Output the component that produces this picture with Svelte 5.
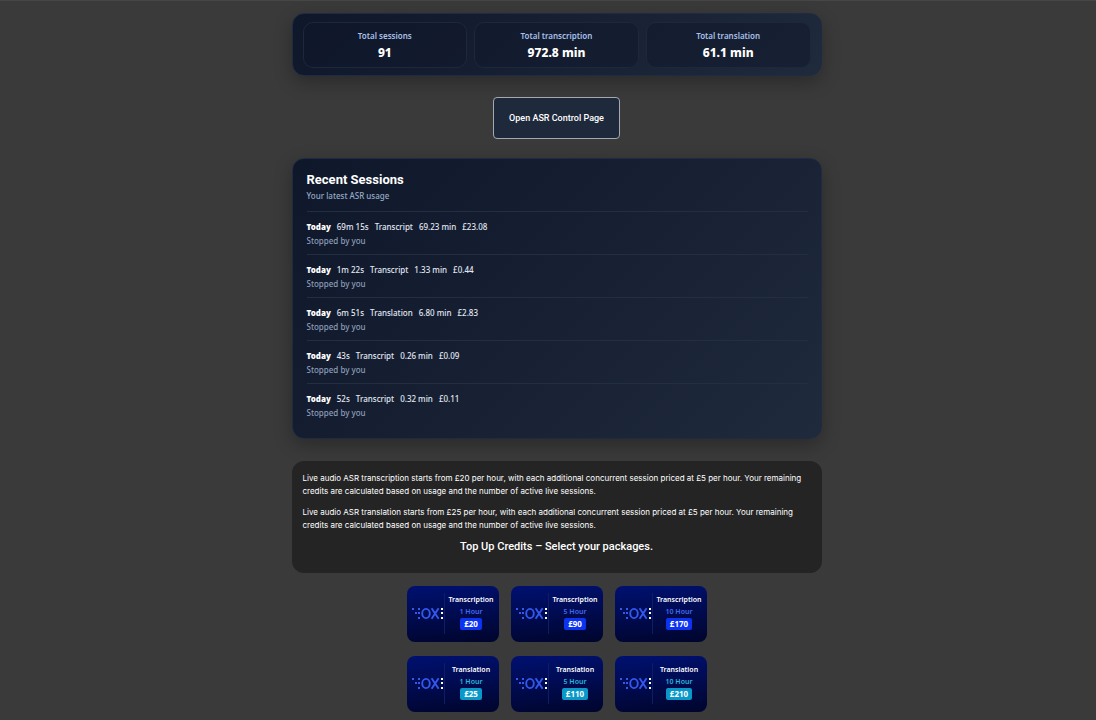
<script>
  const stats = [
    { label: "Total sessions", value: "91" },
    { label: "Total transcription", value: "972.8 min" },
    { label: "Total translation", value: "61.1 min" },
  ];

  const sessions = [
    { day: "Today", length: "69m 15s", type: "Transcript", minutes: "69.23 min", cost: "£23.08" },
    { day: "Today", length: "1m 22s", type: "Transcript", minutes: "1.33 min", cost: "£0.44" },
    { day: "Today", length: "6m 51s", type: "Translation", minutes: "6.80 min", cost: "£2.83" },
    { day: "Today", length: "43s", type: "Transcript", minutes: "0.26 min", cost: "£0.09" },
    { day: "Today", length: "52s", type: "Transcript", minutes: "0.32 min", cost: "£0.11" },
  ];

  const packages = [
    { type: "Transcription", hours: 1, price: 20 },
    { type: "Transcription", hours: 5, price: 90 },
    { type: "Transcription", hours: 10, price: 170 },
    { type: "Translation", hours: 1, price: 25 },
    { type: "Translation", hours: 5, price: 110 },
    { type: "Translation", hours: 10, price: 210 },
  ];

  let selected = null;
</script>

<main>
  <section class="panel stats">
    {#each stats as stat}
      <div class="stat">
        <span class="stat-label">{stat.label}</span>
        <strong class="stat-value">{stat.value}</strong>
      </div>
    {/each}
  </section>

  <a class="open-btn" href="#asr">Open ASR Control Page</a>

  <section class="panel sessions">
    <h2>Recent Sessions</h2>
    <p class="sub">Your latest ASR usage</p>
    <ul>
      {#each sessions as s}
        <li>
          <div class="line">
            <strong>{s.day}</strong>
            <span>{s.length}</span>
            <span>{s.type}</span>
            <span>{s.minutes}</span>
            <span>{s.cost}</span>
          </div>
          <div class="status">Stopped by you</div>
        </li>
      {/each}
    </ul>
  </section>

  <section class="info">
    <p>
      Live audio ASR transcription starts from £20 per hour, with each additional concurrent session
      priced at £5 per hour. Your remaining credits are calculated based on usage and the number of
      active live sessions.
    </p>
    <p>
      Live audio ASR translation starts from £25 per hour, with each additional concurrent session
      priced at £5 per hour. Your remaining credits are calculated based on usage and the number of
      active live sessions.
    </p>
    <h3>Top Up Credits – Select your packages.</h3>
  </section>

  <div class="packages">
    {#each packages as pack}
      <button
        class="pack"
        class:translation={pack.type === "Translation"}
        on:click={() => (selected = pack)}
      >
        <svg class="logo" viewBox="0 0 32 14" aria-hidden="true">
          <g fill="#3358ee">
            <rect x="0" y="1" width="2" height="2" />
            <rect x="3" y="5" width="2" height="2" />
            <rect x="6" y="1" width="2" height="2" />
            <rect x="6" y="5" width="2" height="2" />
            <rect x="6" y="10" width="2" height="2" />
          </g>
          <ellipse cx="14" cy="6.5" rx="3.8" ry="4.6" fill="none" stroke="#3358ee" stroke-width="1.9" />
          <path d="M19.6 1.2L26.6 11.8M26.6 1.2L19.6 11.8" stroke="#3358ee" stroke-width="1.9" />
          <g fill="#fff">
            <rect x="29" y="1" width="2" height="2" />
            <rect x="29" y="5" width="2" height="2" />
            <rect x="29" y="10" width="2" height="2" />
          </g>
        </svg>
        <span class="details">
          <span class="type">{pack.type}</span>
          <span class="hours">{pack.hours} Hour</span>
          <span class="price">£{pack.price}</span>
        </span>
      </button>
    {/each}
  </div>
</main>

<style>
  :global(body) {
    margin: 0;
    background: #3a3a3a;
  }

  main {
    display: flex;
    flex-direction: column;
    align-items: center;
    padding: 12px 0 8px 17px;
    border-top: 1px solid #464646;
    font-family: Roboto, sans-serif;
    color: #fff;
  }

  .panel,
  .info {
    box-sizing: border-box;
    width: 100%;
    max-width: 530px;
    border-radius: 12px;
  }

  .panel {
    border: 1px solid #1f2b42;
    background: linear-gradient(135deg, #0f172a, #1f2a3c);
    box-shadow: 0 6px 18px rgba(0, 0, 0, 0.28);
    font-family: "Noto Sans", sans-serif;
  }

  .stats {
    display: grid;
    grid-template-columns: repeat(3, 1fr);
    gap: 7px;
    padding: 8px 10px 7px;
  }

  .stat {
    display: flex;
    flex-direction: column;
    align-items: center;
    padding: 6px 8px 5px;
    border: 1px solid #1d283b;
    border-radius: 10px;
    background: rgba(15, 23, 42, 0.45);
  }

  .stat-label {
    font-size: 8px;
    line-height: 14px;
    font-weight: 600;
    color: #a9c1ea;
  }

  .stat-value {
    font-size: 12px;
    line-height: 19px;
    font-weight: 800;
  }

  .open-btn {
    box-sizing: border-box;
    margin: 21px 0 19px;
    padding: 12px 15px;
    border: 1px solid #a4a9b0;
    border-radius: 4px;
    background: #1e293b;
    color: #fff;
    font-size: 9px;
    line-height: 16px;
    font-weight: 500;
    text-decoration: none;
  }

  .sessions {
    padding: 12px 13px 12px 14px;
  }

  h2 {
    margin: 0;
    font-family: Roboto, sans-serif;
    font-size: 13px;
    line-height: 18px;
    font-weight: 700;
  }

  .sub {
    margin: 0 0 8px;
    font-size: 8px;
    line-height: 14px;
    font-weight: 500;
    color: #94a9c6;
  }

  ul {
    margin: 0;
    padding: 0;
    list-style: none;
  }

  li {
    padding: 7px 0 6px;
    border-top: 1px solid #232e41;
  }

  .line {
    display: flex;
    gap: 6px;
    font-size: 8px;
    line-height: 15px;
    font-weight: 500;
    color: #e2e8f4;
  }

  .line strong {
    font-weight: 900;
    color: #fff;
  }

  .status {
    font-size: 8px;
    line-height: 14px;
    font-weight: 500;
    color: #8c9db8;
  }

  .info {
    margin: 22px 0 13px;
    padding: 11px 11px 20px;
    background: #242424;
  }

  .info p {
    margin: 0 0 8px;
    font-family: Inter, Roboto, sans-serif;
    font-size: 8px;
    line-height: 13px;
  }

  h3 {
    margin: 0;
    font-size: 11px;
    line-height: 13px;
    font-weight: 500;
    text-align: center;
  }

  .packages {
    display: grid;
    grid-template-columns: repeat(3, 92px);
    gap: 14px 12px;
  }

  .pack {
    display: grid;
    grid-template-columns: 32px 1fr;
    align-items: center;
    padding: 7px 1px 8px 5px;
    border: 0;
    border-radius: 8px;
    background: linear-gradient(175deg, #001070, #000b50 50%, #00052c);
    color: #fff;
    font-family: "Noto Sans", sans-serif;
    cursor: pointer;
  }

  .logo {
    display: block;
    width: 32px;
    height: 14px;
  }

  .details {
    display: flex;
    flex-direction: column;
    align-items: center;
    padding-bottom: 4px;
    border-left: 1px solid #0f1d62;
  }

  .type {
    font-size: 7px;
    line-height: 13px;
    font-weight: 600;
  }

  .hours {
    font-size: 7px;
    line-height: 11px;
    font-weight: 600;
    color: #4468f0;
  }

  .price {
    margin-top: 1px;
    padding: 0 4px;
    border-radius: 2px;
    background: #0c33f0;
    font-size: 8px;
    line-height: 12px;
    font-weight: 700;
  }

  .translation .hours {
    color: #25b8dc;
  }

  .translation .price {
    background: #0a98c8;
  }
</style>
